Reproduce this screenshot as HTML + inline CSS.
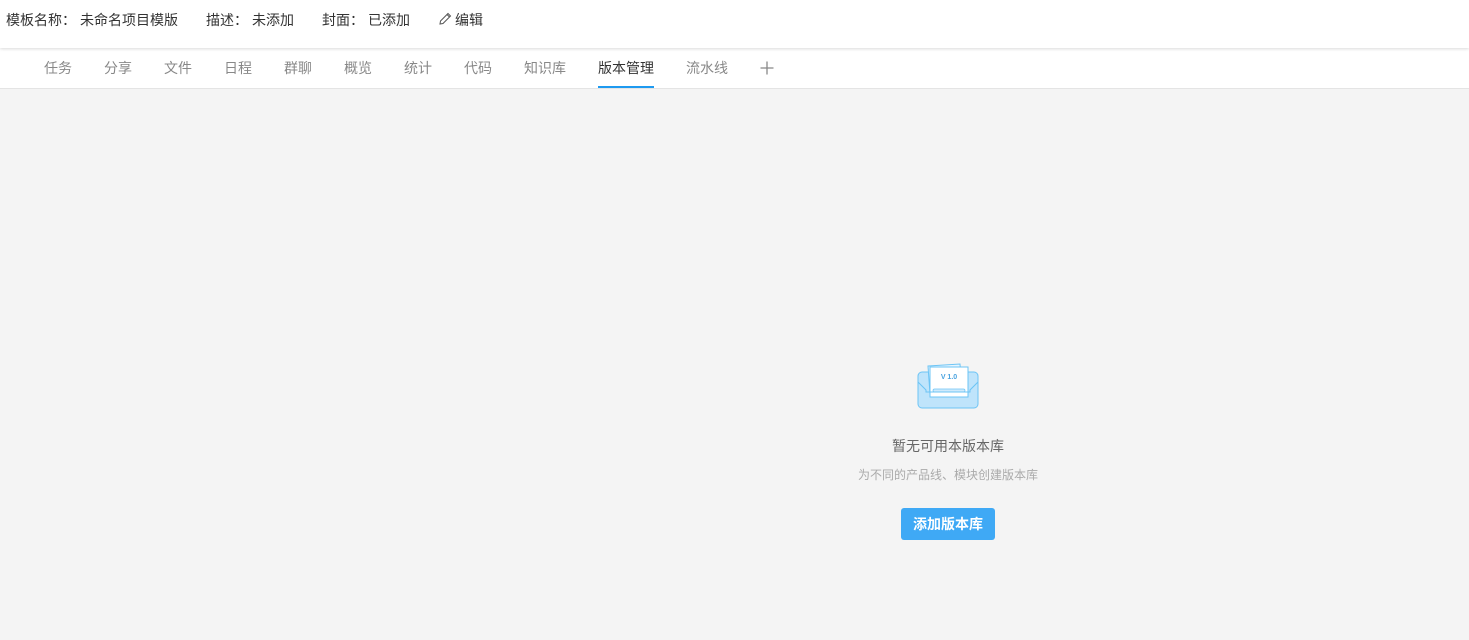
<!DOCTYPE html>
<html><head><meta charset="utf-8"><style>
*{margin:0;padding:0;box-sizing:border-box}
body{width:1469px;height:640px;background:#f4f4f4;font-family:"Liberation Sans","Noto Sans CJK SC",sans-serif;font-size:14px;position:relative;overflow:hidden}
.hdr{position:absolute;left:0;top:0;width:1469px;height:48px;background:#fff;box-shadow:0 1px 3px rgba(0,0,0,.15);z-index:2}
.hdr span{position:absolute;top:10px;color:#333;white-space:nowrap}
.tabs{position:absolute;left:0;top:48px;width:1469px;height:41px;background:#fff;border-bottom:1px solid #e4e4e4}
.tabs span{position:absolute;top:10px;color:#888;white-space:nowrap}
.tabs .on{color:#333}
.ul{position:absolute;left:598px;top:86px;width:56px;height:2px;background:#1e9af0}
.t1{position:absolute;left:0;width:1469px;top:436px;text-align:center;padding-left:427px;color:#666;font-size:14px}
.t2{position:absolute;left:0;width:1469px;top:466px;padding-left:427px;text-align:center;color:#aaa;font-size:12px}
.btn{position:absolute;left:901px;top:508px;width:94px;height:32px;background:#3fa9f5;border-radius:3px;color:#fff;font-size:14px;text-align:center;line-height:32px;font-weight:bold}
</style></head><body>
<div class="hdr">
<span style="left:6px">模板名称：</span><span style="left:80px">未命名项目模版</span>
<span style="left:206px">描述：</span><span style="left:252px">未添加</span>
<span style="left:322px">封面：</span><span style="left:368px">已添加</span>
<svg style="position:absolute;left:438px;top:12px" width="14" height="14" viewBox="0 0 14 14"><path d="M2 12 L2.5 9 L10 1.5 L12.5 4 L5 11.5 Z M9 2.5 L11.5 5" fill="none" stroke="#555" stroke-width="1"/></svg>
<span style="left:455px">编辑</span>
</div>
<div class="tabs">
<span style="left:44px">任务</span><span style="left:104px">分享</span><span style="left:164px">文件</span><span style="left:224px">日程</span><span style="left:284px">群聊</span><span style="left:344px">概览</span><span style="left:404px">统计</span><span style="left:464px">代码</span><span style="left:524px">知识库</span><span class="on" style="left:598px">版本管理</span><span style="left:686px">流水线</span>
<svg style="position:absolute;left:760px;top:13px" width="14" height="14" viewBox="0 0 14 14"><path d="M7 0.5V13.5M0.5 7H13.5" stroke="#888" stroke-width="1.3"/></svg>
</div>
<div class="ul"></div>
<svg style="position:absolute;left:916px;top:362px" width="64" height="48" viewBox="0 0 64 48">
<rect x="2" y="10" width="60" height="36" rx="4" fill="#bfe4fb" stroke="#6cc4f5" stroke-width="1"/>
<path d="M12 4 L44 2 L46 30 L14 32 Z" fill="#e6f5fe" stroke="#6cc4f5"/>
<rect x="14" y="5" width="38" height="30" fill="#fff" stroke="#6cc4f5"/>
<text x="33" y="17" font-size="7" font-weight="bold" fill="#4aa3e0" text-anchor="middle" font-family="Liberation Sans">V 1.0</text>
<rect x="17" y="27" width="32" height="3" rx="1.5" fill="#cfeafc" stroke="#6cc4f5" stroke-width=".7"/>
<path d="M2 20 L10 28 L10 30 L54 30 L54 28 L62 20" fill="none" stroke="#6cc4f5"/>
</svg>
<div class="t1">暂无可用本版本库</div>
<div class="t2">为不同的产品线、模块创建版本库</div>
<div class="btn">添加版本库</div>
</body></html>
